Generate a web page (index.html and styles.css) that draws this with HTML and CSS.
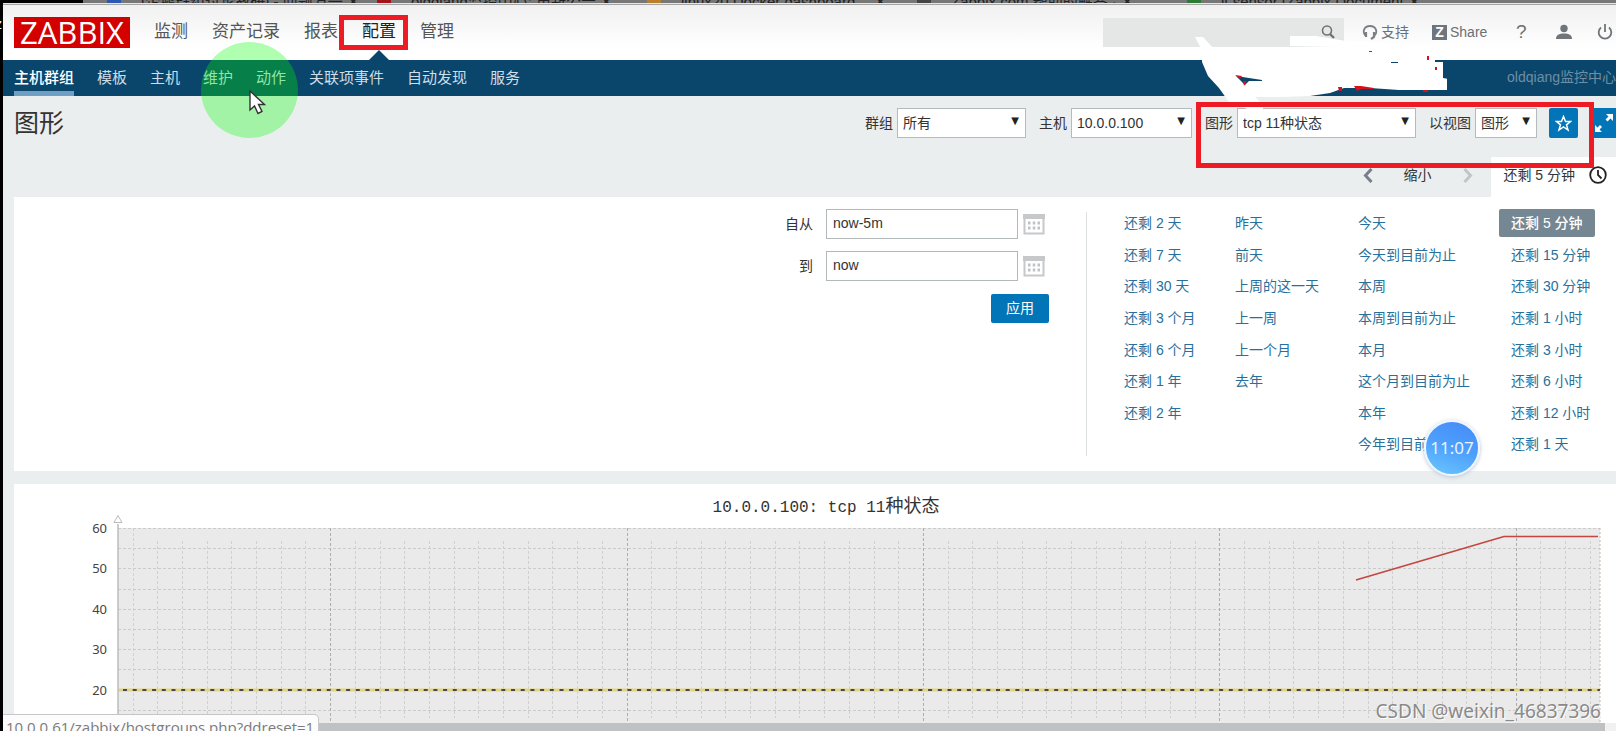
FILE: index.html
```html
<!DOCTYPE html>
<html lang="zh-CN">
<head>
<meta charset="utf-8">
<title>图形</title>
<link rel="stylesheet" href="styles.css">
</head>
<body>
<div class="tabstrip">
  <span class="tab tab-blue">[企鹅群组讨论教研] - 问题万一 ✕</span>
  <span class="tab tab-red">oldqiang监控中心: 更新公告 ✕</span>
  <span class="tab tab-orange">linux20 Docker dashboard… ✕</span>
  <span class="tab tab-grey">Zabbix.com 帮助的解答 · ✕</span>
  <span class="tab tab-green">lt sensor [Zabbix Document ✕</span>
</div>
<span class="edge-letter">z</span>
<div class="page">
  <header class="header">
    <a class="logo" href="#">ZABBIX</a>
    <nav class="menu">
      <a href="#">监测</a><a href="#">资产记录</a><a href="#">报表</a><a href="#" class="current">配置</a><a href="#">管理</a>
    </nav>
    <div class="tools">
      <label class="search">
        <input type="text" aria-label="搜索">
        <svg width="16" height="16" viewBox="0 0 16 16" fill="none" stroke="#6f7377"><circle cx="7" cy="6.500" r="4.500" stroke-width="1.600"/><path d="M10 10l4 4" stroke-width="2.400"/></svg>
      </label>
      <a href="#" class="support"><svg width="16" height="16" viewBox="0 0 16 16" fill="none" stroke="#7b8084" stroke-width="1.800"><path d="M3.500 11.500C0 8 2 2 8 2s8 6 4.500 9.500"/><path d="M4 8v5M12 8v5l-3 2" stroke-width="2.200"/></svg>支持</a>
      <a href="#" class="share"><b>Z</b>Share</a>
      <a href="#" class="help">?</a>
      <a href="#" class="icon user" aria-label="用户"><svg width="16" height="16" viewBox="0 0 16 16" fill="#707579"><circle cx="8" cy="4.500" r="3.700"/><path d="M0 15c0-4 3-5.500 8-5.500s8 1.500 8 5.500z"/></svg></a>
      <a href="#" class="icon power" aria-label="退出"><svg width="16" height="16" viewBox="0 0 16 16" fill="none" stroke="#707579" stroke-width="1.800"><path d="M4 3.500a6.300 6.300 0 1 0 8 0M8 0v8"/></svg></a>
    </div>
  </header>
  <nav class="subnav">
    <a href="#" class="current">主机群组</a><a href="#">模板</a><a href="#">主机</a><a href="#">维护</a><a href="#">动作</a><a href="#">关联项事件</a><a href="#">自动发现</a><a href="#">服务</a>
    <span class="server">oldqiang监控中心</span>
  </nav>
  <main class="content">
    <div class="titlebar">
      <h1>图形</h1>
      <form class="filters">
        <label for="grp">群组</label><span class="drop drop-group"><select id="grp"><option>所有</option></select></span>
        <label for="host">主机</label><span class="drop drop-host"><select id="host"><option>10.0.0.100</option></select></span>
        <label for="graph">图形</label><span class="drop drop-graph"><select id="graph"><option>tcp 11种状态</option></select></span>
        <label for="view">以视图</label><span class="drop drop-view"><select id="view"><option>图形</option></select></span>
        <button type="button" class="square star" aria-label="收藏"><svg width="17" height="17" viewBox="0 0 17 17" fill="none" stroke="#fff" stroke-width="1.500"><path d="M8.500 1.500l2 5h5l-4 3.300 1.500 5.200-4.500-3-4.500 3 1.500-5.200-4-3.300h5z"/></svg></button>
        <button type="button" class="square expand" aria-label="全屏"><svg width="20" height="20" viewBox="0 0 20 20" fill="#fff"><path d="M12 1h7v7l-2.500-2.500-3 3-2-2 3-3zM1 12l2.500 2.500 2.500-2.500 2 2-2.500 2.500L8 19H1z"/></svg></button>
      </form>
    </div>
    <div class="timebar">
      <button type="button" aria-label="后退"><svg width="10" height="15" viewBox="0 0 10 15" fill="none" stroke="#768089" stroke-width="3"><path d="M8.500 1L2.500 7.500l6 6.500"/></svg></button>
      <button type="button" class="zoomout">缩小</button>
      <button type="button" aria-label="前进"><svg width="10" height="15" viewBox="0 0 10 15" fill="none" stroke="#bfc5c9" stroke-width="3"><path d="M1.500 1l6 6.500-6 6.500"/></svg></button>
      <a href="#" class="timetab">还剩 5 分钟<svg width="18" height="18" viewBox="0 0 18 18" fill="none" stroke="#222" stroke-width="1.800"><circle cx="9" cy="9" r="7.800"/><path d="M9 4v5l3.500 3.500"/></svg></a>
    </div>
    <section class="panel period">
      <form class="range">
        <label for="from">自从</label><input id="from" type="text" value="now-5m">
        <button type="button" class="cal" aria-label="选择开始日期"><svg width="22" height="22" viewBox="0 0 22 22"><path d="M1.500 3v17.500h19V3" fill="none" stroke="#c6c8ca" stroke-width="2"/><path d="M0 1h22v5H0z" fill="#c6c8ca"/><path d="M5 10h12M5 15h12" stroke="#bfc1c3" stroke-width="3" stroke-dasharray="2.500 2.250"/></svg></button>
        <label for="to">到</label><input id="to" type="text" value="now">
        <button type="button" class="cal" aria-label="选择结束日期"><svg width="22" height="22" viewBox="0 0 22 22"><path d="M1.500 3v17.500h19V3" fill="none" stroke="#c6c8ca" stroke-width="2"/><path d="M0 1h22v5H0z" fill="#c6c8ca"/><path d="M5 10h12M5 15h12" stroke="#bfc1c3" stroke-width="3" stroke-dasharray="2.500 2.250"/></svg></button>
        <button type="button" class="apply">应用</button>
      </form>
      <div class="presets">
        <ul><li><a href="#">还剩 2 天</a></li><li><a href="#">还剩 7 天</a></li><li><a href="#">还剩 30 天</a></li><li><a href="#">还剩 3 个月</a></li><li><a href="#">还剩 6 个月</a></li><li><a href="#">还剩 1 年</a></li><li><a href="#">还剩 2 年</a></li></ul>
        <ul><li><a href="#">昨天</a></li><li><a href="#">前天</a></li><li><a href="#">上周的这一天</a></li><li><a href="#">上一周</a></li><li><a href="#">上一个月</a></li><li><a href="#">去年</a></li></ul>
        <ul><li><a href="#">今天</a></li><li><a href="#">今天到目前为止</a></li><li><a href="#">本周</a></li><li><a href="#">本周到目前为止</a></li><li><a href="#">本月</a></li><li><a href="#">这个月到目前为止</a></li><li><a href="#">本年</a></li><li><a href="#">今年到目前为止</a></li></ul>
        <ul><li><a href="#" class="selected">还剩 5 分钟</a></li><li><a href="#">还剩 15 分钟</a></li><li><a href="#">还剩 30 分钟</a></li><li><a href="#">还剩 1 小时</a></li><li><a href="#">还剩 3 小时</a></li><li><a href="#">还剩 6 小时</a></li><li><a href="#">还剩 12 小时</a></li><li><a href="#">还剩 1 天</a></li></ul>
      </div>
    </section>
    <section class="panel graph">
      <h2>10.0.0.100: tcp 11<span>种状态</span></h2>
      <svg id="chart" class="chart" viewBox="0 0 1602 230" role="img" aria-label="tcp 11种状态"></svg>
    </section>
  </main>
  <div class="scrollbar"><div class="thumb"></div></div>
</div>
<div class="status">10.0.0.61/zabbix/hostgroups.php?ddreset=1</div>
<div class="bubble">11:07</div>
<div class="halo"></div>
<svg class="cursor" width="17" height="26" viewBox="0 0 17 26"><path d="M1 1v19l4.500-4 3.500 7.500 4-2-3.500-7h6z" fill="#fff" stroke="#333" stroke-width="1.400"/></svg>
<svg class="scribble" width="254" height="76" viewBox="1193 35 254 76">
  <path fill="#fff" d="M1195 37h8l10 11 78-1 45-1h-46v-10h26l30 5 90 6v12h-1v3h8v16l10 2v10h-54l-29-2h-26l-14 5-20 3-28 1h-27l5 5 3 2v7h-10l-24-9-10-14-11-12-6-14V50z"/>
  <path fill="#0a466b" d="M1236 76l26 4v1h-13l-4 4zM1391 62h7v1h-7z"/>
  <path fill="#d8101c" d="M1235 75l7 1-2 3zM1243 81h4l-3 5zM1338 87h4v4h-3zM1354 86h7l13 2v1h-12l-5 2zM1423 90h5v2h-5zM1427 56h2v4h-2zM1435 67h2v3h-2zM1369 51h3v1h-3z"/>
</svg>
<div class="mark mark-menu"></div>
<div class="mark mark-filter"></div>
<div class="watermark">CSDN @weixin_46837396</div>
<script src="chart.js"></script>
</body>
</html>
```
FILE: styles.css
```css
* { box-sizing: border-box; }
html, body { height: 100%; }
body {
  margin: 0;
  display: flex;
  flex-direction: column;
  overflow: hidden;
  position: relative;
  background: #000;
  color: #333;
  font: 14px/20px "Liberation Sans", "Noto Sans CJK SC", sans-serif;
}
a { color: inherit; text-decoration: none; white-space: nowrap; }
button, input, select { font: inherit; color: inherit; margin: 0; }
button { border: 0; padding: 0; background: none; }
svg { display: block; flex: none; }
ul { margin: 0; padding: 0; list-style: none; }

.tabstrip {
  display: flex;
  height: 3px;
  margin-left: 83px;
  padding-left: 24px;
  gap: 16px;
  overflow: hidden;
  background: #777;
  color: #222;
  font-size: 15px;
  line-height: 3px;
  flex: none;
}
.tab { width: 254px; padding-left: 20px; border-left: 14px solid; white-space: nowrap; overflow: hidden; }
.tab-blue { border-color: #2b58b5; }
.tab-red { border-color: #a41318; }
.tab-orange { border-color: #b9802c; }
.tab-grey { border-color: #444; }
.tab-green { border-color: #2d7a34; }
.edge-letter { position: absolute; left: -5px; top: 14px; color: #fff; z-index: 0; }

.page {
  flex: 1;
  min-height: 0;
  margin-left: 3px;
  display: flex;
  flex-direction: column;
  background: #ebeeef;
  position: relative;
  z-index: 1;
}

.header {
  display: flex;
  align-items: center;
  flex: none;
  height: 57px;
  padding: 0 3px 0 11px;
  border-top: 1px solid #e6e6e6;
  box-shadow: inset 0 1px #a5a5a5;
  background: linear-gradient(#f0f0f0, #fff 44px);
}
.logo {
  width: 116px;
  height: 31px;
  background: #d40000;
  color: #fff;
  font: 31px/31px "Open Sans", sans-serif;
  text-align: center;
}
.menu { display: flex; gap: 24px; margin-left: 24px; font-size: 17px; line-height: 56px; color: #555; }
.menu .current { color: #222; position: relative; }
.menu .current::after {
  content: "";
  position: absolute;
  left: 50%;
  bottom: 0;
  margin-left: -10px;
  border: 10px solid transparent;
  border-top-width: 0;
  border-bottom-color: #0a466b;
}
.tools { display: flex; align-items: center; margin-left: auto; color: #6b7074; }
.search { position: relative; width: 241px; height: 29px; margin-right: 18px; }
.search input { width: 100%; height: 100%; border: 0; background: #e5e7e7; }
.search svg { position: absolute; right: 8px; top: 6px; }
.support { display: flex; align-items: center; gap: 3px; width: 70px; }
.share { display: flex; align-items: center; gap: 3px; width: 84px; }
.share b { width: 15px; height: 15px; background: #6f757d; color: #fff; line-height: 15px; text-align: center; }
.help { font-size: 19px; width: 40px; }
.icon { width: 41px; }
.power { width: 16px; }

.subnav {
  display: flex;
  gap: 23px;
  flex: none;
  height: 36px;
  padding-left: 11px;
  background: #0a466b;
  color: #cfdde6;
  font-size: 15px;
  line-height: 35px;
}
.subnav .current { color: #fff; font-weight: 500; box-shadow: inset 0 -5px #6f9fc3; }
.server { margin-left: auto; font-size: 14px; color: #6e8ea4; white-space: nowrap; }

.content { flex: 1; min-height: 0; overflow: hidden; }
.titlebar { display: flex; align-items: center; justify-content: space-between; padding: 12px 0 0 11px; }
h1 { margin: 0; font-size: 25px; line-height: 30px; font-weight: 400; }
.filters { display: flex; align-items: center; }
.filters label { margin-right: 4px; }
.drop { position: relative; height: 30px; margin-right: 13px; }
.drop::after { content: "▼"; position: absolute; right: 7px; top: 4px; font: 10px/18px "DejaVu Sans", sans-serif; color: #222; pointer-events: none; }
.drop select { appearance: none; width: 100%; height: 30px; padding: 0 5px; border: 1px solid #b5babd; border-radius: 0; background: #fff; }
.drop-group { width: 129px; }
.drop-host { width: 121px; }
.drop-graph { width: 179px; }
.drop-view { width: 62px; margin-right: 12px; }
.square { display: flex; align-items: center; justify-content: center; height: 30px; background: #0275b8; border-radius: 2px; }
.star { width: 29px; margin-right: 14px; }
.expand { width: 24px; border-radius: 2px 0 0 2px; }

.timebar { display: flex; align-items: center; justify-content: flex-end; height: 40px; margin-top: 19px; padding-bottom: 4px; }
.timebar .zoomout { margin: 0 32px 0 30px; }
.timetab { display: flex; align-items: center; gap: 14px; height: 40px; margin: 0 0 -4px 18px; padding: 0 9px 4px 12px; background: #fff; }

.panel { background: #fff; margin-left: 11px; }
.period { display: flex; justify-content: flex-end; padding: 12px 0 15px; }
.range {
  display: grid;
  grid-template-columns: auto 192px 31px;
  grid-auto-rows: 30px;
  row-gap: 12px;
  align-content: start;
  align-items: center;
  margin-right: 37px;
}
.range label { text-align: right; margin-right: 13px; }
.range input { width: 100%; height: 30px; padding: 0 6px 2px; border: 1px solid #b3b8ba; }
.cal { justify-self: center; }
.apply { grid-column: 2 / 4; justify-self: end; width: 58px; height: 29px; border-radius: 2px; background: #0275b8; color: #fff; }
.presets {
  display: grid;
  grid-template-columns: 111px 123px 153px 94px;
  width: 530px;
  margin-top: 3px;
  padding-left: 37px;
  border-left: 1px solid #dcdfe0;
  color: #27709c;
}
.presets ul { display: grid; grid-template-rows: repeat(8, 1fr); min-height: 253px; margin: -3px 0 -6px; }
.presets a { display: inline-block; line-height: 28px; }
.presets .selected { margin-left: -12px; padding: 0 12px; border-radius: 2px; background: #748792; color: #fff; font-weight: 500; }

.graph { margin-top: 13px; padding-top: 12px; }
h2 { margin: 0; padding-left: 22px; text-align: center; font: 400 16px/22px "Liberation Mono", "Noto Sans CJK SC", monospace; }
h2 span { font-size: 18px; }
.chart { width: 100%; height: auto; font: 13px "Noto Sans", sans-serif; }

.scrollbar { flex: none; height: 8px; background: #f1f1f1; }
.thumb { height: 100%; margin-right: 11px; background: #c0c1c2; }

.status {
  position: absolute;
  z-index: 2;
  left: 3px;
  bottom: -9px;
  padding: 2px 4px 2px 3px;
  border: 1px solid #c4c6c8;
  border-left: 0;
  border-radius: 0 5px 0 0;
  background: #fcfcfd;
  color: #7b7b7b;
  font: 15px/20px "Open Sans", sans-serif;
}
.bubble {
  position: absolute;
  z-index: 2;
  top: 420px;
  right: 136px;
  width: 56px;
  height: 56px;
  border: 2px solid #eef6ff;
  border-radius: 50%;
  background: linear-gradient(200deg, #4489f8, #4ea0fc 50%, #6cc8fd);
  box-shadow: 0 1px 4px #b8c4d4;
  color: #e8f4ff;
  font: 17px/52px "Noto Sans", sans-serif;
  text-align: center;
}
.halo { position: absolute; z-index: 2; left: 201px; top: 42px; width: 97px; height: 96px; border-radius: 50%; background: rgba(0, 255, 0, .31); }
.cursor { position: absolute; z-index: 3; left: 249px; top: 90px; }
.scribble { position: absolute; z-index: 3; top: 35px; right: 169px; }
.mark { position: absolute; z-index: 4; border: 5px solid #ed1c24; }
.mark-menu { left: 339px; top: 15px; width: 69px; height: 35px; }
.mark-filter { right: 22px; top: 102px; width: 398px; height: 66px; }
.watermark {
  position: absolute;
  z-index: 4;
  right: 15px;
  bottom: 7px;
  color: #8a8a8a;
  font: 19px/26px "Noto Sans", sans-serif;
  text-shadow: 1px 1px #fff;
}
```
FILE: chart.js
```js
const svg = document.getElementById('chart');
const left = 104, right = 1586, top_ = 9, bottom = 230;
const step = 20.2, minor = 24.7;
let out = `<rect x="${left}" y="${top_}" width="${right - left}" height="${bottom - top_}" fill="#eaeaea"/>`;

const line = (x1, y1, x2, y2, color, dash, width = 1) =>
  `<line x1="${x1}" y1="${y1}" x2="${x2}" y2="${y2}" stroke="${color}" stroke-width="${width}" stroke-dasharray="${dash}"/>`;

for (let i = 0; i < 10; i++) {
  const y = Math.round(top_ + i * step) + 0.5;
  out += line(left, y, right, y, '#cbcbcb', '3 2');
}
for (let i = 0; i < 60; i++) {
  const x = Math.round(118.5 + i * minor) + 0.5;
  const major = i % 12 === 8;
  if (x < right) out += line(x, major || i === 0 ? top_ : 22, x, major ? 205 : 199, major ? '#adadad' : '#d0d0d0', '3 2');
}
out += line(right, top_, right, 205, '#c4b8a8', '2 2');
out += line(left, 171, right, 171, '#e2d582', 'none', 3);
out += line(left + 5, 171, right, 171, '#4b4650', '4 5.7', 2);
out += `<path d="M${left} 5V230" stroke="#bdbdbd" stroke-width="1.500"/><path d="M${left - 4} 3.500l4-7 4 7z" fill="#fff" stroke="#bbb"/>`;
out += '<path d="M1342 61L1490 17.500H1584" fill="none" stroke="#c4463f" stroke-width="1.700"/>';
[60, 50, 40, 30, 20].forEach((v, i) => {
  out += `<text x="93" y="${Math.round(top_ + 5 + i * step * 2)}" text-anchor="end" fill="#444">${v}</text>`;
});
svg.innerHTML = out;
svg.style.overflow = 'visible';
```
